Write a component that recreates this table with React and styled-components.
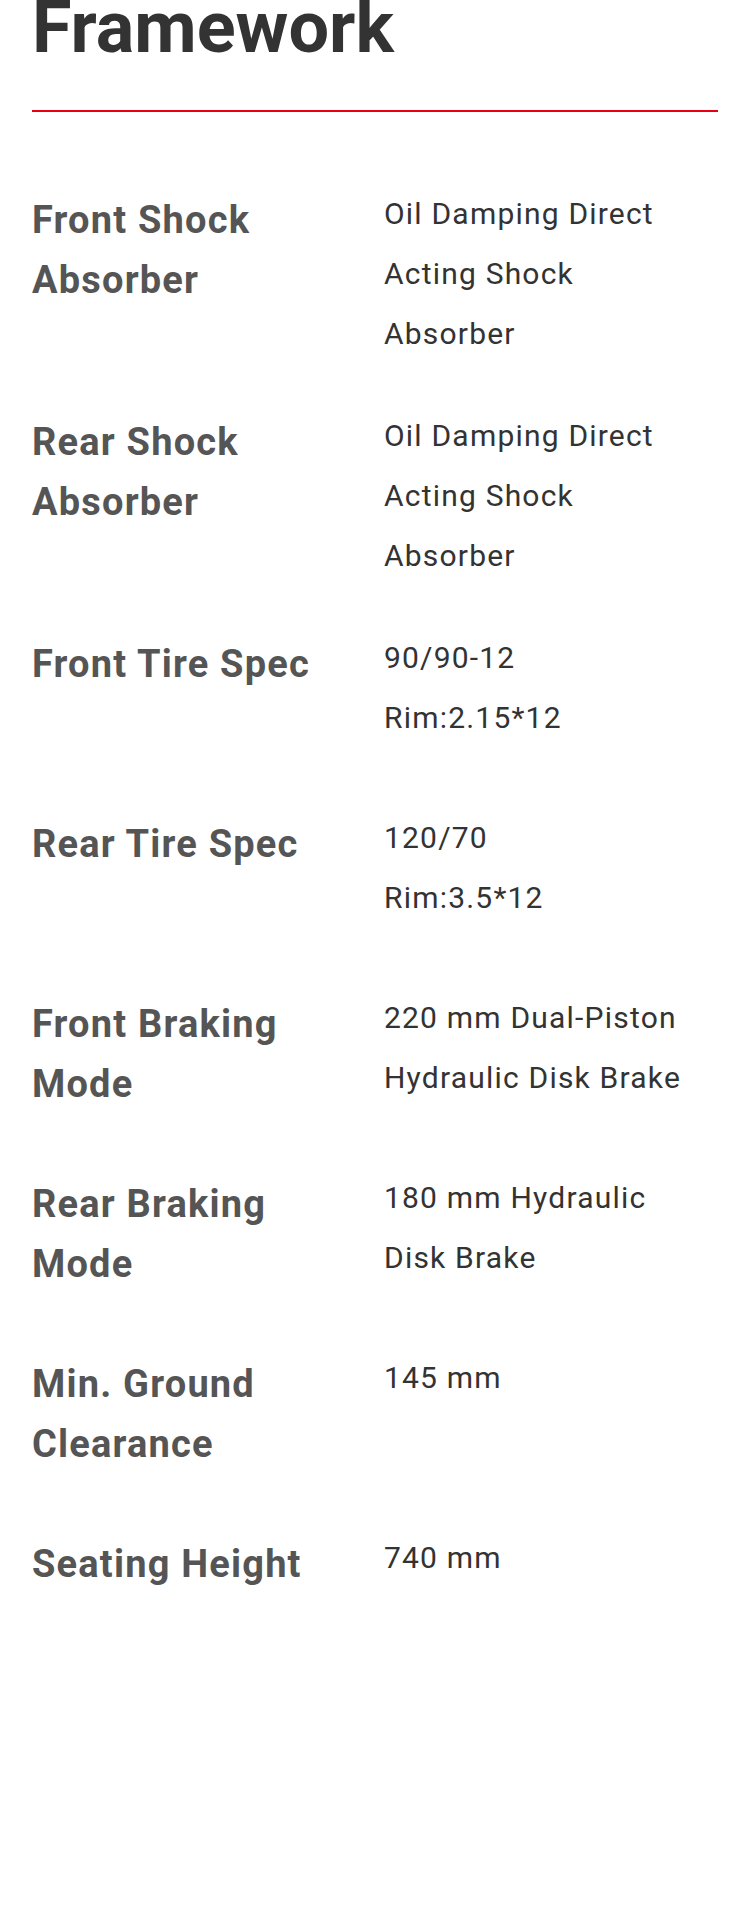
import React from "react";
import styled, { createGlobalStyle } from "styled-components";

const specs = [
  { label: ["Front Shock", "Absorber"], value: ["Oil Damping Direct", "Acting Shock", "Absorber"] },
  { label: ["Rear Shock", "Absorber"], value: ["Oil Damping Direct", "Acting Shock", "Absorber"] },
  { label: ["Front Tire Spec"], value: ["90/90-12", "Rim:2.15*12"] },
  { label: ["Rear Tire Spec"], value: ["120/70", "Rim:3.5*12"] },
  { label: ["Front Braking", "Mode"], value: ["220 mm Dual-Piston", "Hydraulic Disk Brake"] },
  { label: ["Rear Braking", "Mode"], value: ["180 mm Hydraulic", "Disk Brake"] },
  { label: ["Min. Ground", "Clearance"], value: ["145 mm"] },
  { label: ["Seating Height"], value: ["740 mm"] },
];

const GlobalStyle = createGlobalStyle`
  html, body {
    margin: 0;
    padding: 0;
    background: #fff;
  }
  body {
    font-family: Roboto, "Liberation Sans", sans-serif;
  }
`;

const Page = styled.div`
  width: 750px;
  min-height: 1916px;
  box-sizing: border-box;
  padding: 0 32px;
  background: #fff;
`;

const Header = styled.header`
  padding-bottom: 54px;
  border-bottom: 2px solid #e60012;
`;

const Title = styled.h1`
  margin: 0;
  font-size: 72px;
  line-height: 56px;
  font-weight: 700;
  color: #333;
`;

const SpecList = styled.dl`
  margin: 72px 0 0;
`;

const SpecRow = styled.div`
  display: grid;
  grid-template-columns: 352px 1fr;
  min-height: 138px;
  margin-bottom: 42px;
`;

const Label = styled.dt`
  margin: 0;
  padding-top: 6px;
  font-size: 38px;
  line-height: 60px;
  font-weight: 700;
  letter-spacing: 1.2px;
  color: #555;
`;

const Value = styled.dd`
  margin: 0;
  font-size: 30px;
  line-height: 60px;
  font-weight: 400;
  letter-spacing: 1.2px;
  color: #333;
`;

const Line = styled.span`
  display: block;
  white-space: nowrap;
`;

export default function App() {
  return (
    <Page>
      <GlobalStyle />
      <Header>
        <Title>Framework</Title>
      </Header>
      <SpecList>
        {specs.map((s) => (
          <SpecRow key={s.label.join(" ")}>
            <Label>
              {s.label.map((l) => (
                <Line key={l}>{l}</Line>
              ))}
            </Label>
            <Value>
              {s.value.map((v) => (
                <Line key={v}>{v}</Line>
              ))}
            </Value>
          </SpecRow>
        ))}
      </SpecList>
    </Page>
  );
}
